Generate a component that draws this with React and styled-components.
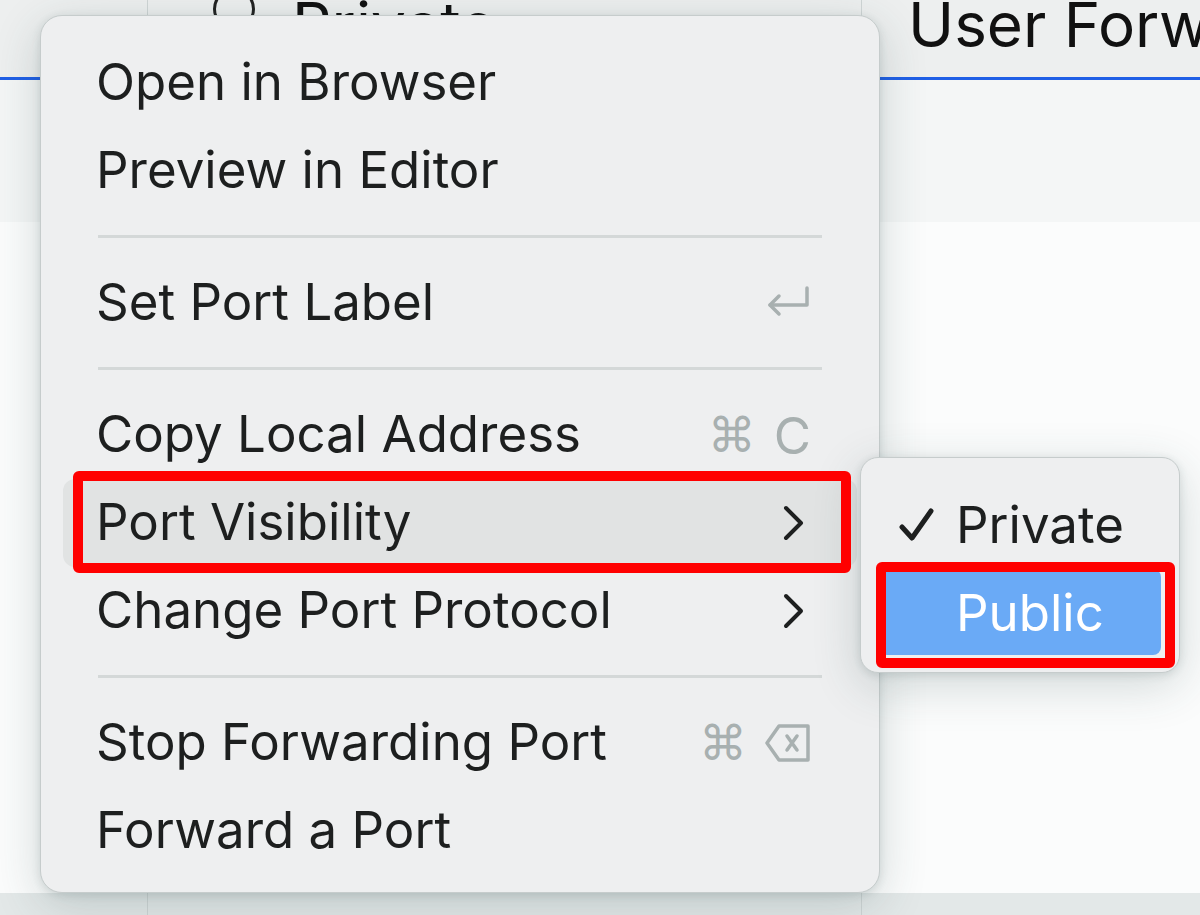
import React from 'react';
import styled, { createGlobalStyle } from 'styled-components';

const GlobalStyle = createGlobalStyle`
  html, body { margin: 0; padding: 0; }
  body { background: #fbfcfc; font-family: Inter, "Noto Sans", sans-serif; }
`;

const Page = styled.div`
  position: relative;
  width: 1200px;
  height: 915px;
  overflow: hidden;
  background: #fbfcfc;
  display: flex;
  flex-direction: column;
`;

const TableRow = styled.div`
  display: grid;
  grid-template-columns: 148px 714px 1fr;
  height: ${({ $h }) => $h}px;
  background: ${({ $bg }) => $bg};
  border-bottom: ${({ $accent }) => ($accent ? '3px solid #1f5fe6' : 'none')};
  flex-shrink: 0;
`;

const Cell = styled.div`
  overflow: hidden;
  border-right: ${({ $divider }) => ($divider ? '1px solid #cfd5d5' : 'none')};
  display: flex;
  align-items: flex-start;
  gap: 37px;
  padding-left: ${({ $pad }) => $pad || 0}px;
  font-family: Inter, "Liberation Sans", sans-serif;
  font-size: 62px;
  line-height: 62px;
  color: #111;
`;

const HeaderText = styled.span`
  margin-top: -6px;
  white-space: nowrap;
`;

const Radio = styled.span`
  width: 36px;
  height: 36px;
  border: 3px solid #222;
  border-radius: 50%;
  margin-top: -12px;
  flex-shrink: 0;
`;

const Band = styled.div`
  height: 142px;
  background: #f4f6f6;
  flex-shrink: 0;
`;

const Filler = styled.div`
  flex: 1;
`;

const Menu = styled.div`
  position: absolute;
  box-sizing: border-box;
  left: ${({ $x }) => $x}px;
  top: ${({ $y }) => $y}px;
  width: ${({ $w }) => $w}px;
  height: ${({ $h }) => $h}px;
  padding: ${({ $pad }) => $pad};
  background: #eeeff0;
  border: 1px solid #c6cccc;
  border-radius: ${({ $r }) => $r}px;
  box-shadow: 0 12px 48px rgba(40, 70, 70, 0.2), 0 2px 8px rgba(40, 70, 70, 0.14);
  display: flex;
  flex-direction: column;
`;

const Item = styled.div`
  display: flex;
  align-items: center;
  height: 88px;
  margin: 0 22px;
  padding: 0 ${({ $right }) => $right || 46}px 0 33px;
  border-radius: 12px;
  background: ${({ $active }) => ($active ? '#e1e3e3' : 'transparent')};
  font-size: 51px;
  color: #1d1f1f;
  white-space: nowrap;
  flex-shrink: 0;
`;

const Label = styled.span`
  flex: 1;
  margin-top: -3px;
`;

const Shortcut = styled.span`
  display: flex;
  align-items: center;
  gap: 18px;
  color: #a8b0b0;
  font-size: 51px;
`;

const CmdGlyph = styled.span`
  font-family: "DejaVu Sans", sans-serif;
  font-size: 48px;
`;

const Separator = styled.div`
  height: 3px;
  background: #d4d8d8;
  margin: 20px 57px 21px;
  flex-shrink: 0;
`;

const SubItem = styled.div`
  display: flex;
  align-items: center;
  height: ${({ $h }) => $h}px;
  margin: 0 18px;
  padding-left: 19px;
  gap: 21px;
  border-radius: 8px;
  background: ${({ $active }) => ($active ? '#6aaaf6' : 'transparent')};
  color: ${({ $active }) => ($active ? '#ffffff' : '#1d1f1f')};
  font-size: 51px;
  flex-shrink: 0;
`;

const CheckSlot = styled.span`
  width: 37px;
  height: 37px;
  display: flex;
  flex-shrink: 0;
`;

const Callout = styled.div`
  position: absolute;
  box-sizing: border-box;
  left: ${({ $x }) => $x}px;
  top: ${({ $y }) => $y}px;
  width: ${({ $w }) => $w}px;
  height: ${({ $h }) => $h}px;
  border: 10px solid #ff0000;
  border-radius: 6px;
  pointer-events: none;
`;

const ReturnIcon = () => (
  <svg width="46" height="36" viewBox="0 0 46 36" fill="none" stroke="#a8b0b0" strokeWidth="3.5" strokeLinecap="round" strokeLinejoin="round">
    <path d="M42 3 V20 H5" />
    <path d="M14 11 L5 20 L14 29" />
  </svg>
);

const DeleteIcon = () => (
  <svg width="46" height="40" viewBox="0 0 46 40" fill="none" stroke="#a8b0b0" strokeWidth="3.5" strokeLinejoin="round" strokeLinecap="round">
    <path d="M14 3 H43 V37 H14 L2 20 Z" />
    <path d="M22 13 L32 27 M32 13 L22 27" />
  </svg>
);

const Chevron = () => (
  <svg width="24" height="38" viewBox="0 0 24 38" fill="none" stroke="#1d1f1f" strokeWidth="4" strokeLinecap="round" strokeLinejoin="round">
    <path d="M4 4 L19 19 L4 34" />
  </svg>
);

const Check = () => (
  <svg width="37" height="37" viewBox="0 0 37 37" fill="none" stroke="#1d1f1f" strokeWidth="5" strokeLinecap="round" strokeLinejoin="round">
    <path d="M4 21 L14 32 L33 5" />
  </svg>
);

const Cmd = ({ children }) => (
  <Shortcut>
    <CmdGlyph>⌘</CmdGlyph>
    {children}
  </Shortcut>
);

export default function App() {
  return (
    <>
      <GlobalStyle />
      <Page>
        <TableRow $h={77} $bg="#edefef" $accent>
          <Cell $divider />
          <Cell $divider $pad={65}>
            <Radio />
            <HeaderText>Private</HeaderText>
          </Cell>
          <Cell $pad={46}>
            <HeaderText>User Forwarded</HeaderText>
          </Cell>
        </TableRow>
        <Band />
        <Filler />
        <TableRow $h={22} $bg="#e3e8e8">
          <Cell $divider />
          <Cell $divider />
          <Cell />
        </TableRow>

        <Menu $x={40} $y={15} $w={840} $h={878} $r={22} $pad="23px 0 19px">
          <Item><Label>Open in Browser</Label></Item>
          <Item><Label>Preview in Editor</Label></Item>
          <Separator />
          <Item><Label>Set Port Label</Label><ReturnIcon /></Item>
          <Separator />
          <Item><Label>Copy Local Address</Label><Cmd>C</Cmd></Item>
          <Item $active $right={51}><Label>Port Visibility</Label><Chevron /></Item>
          <Item $right={51}><Label>Change Port Protocol</Label><Chevron /></Item>
          <Separator />
          <Item><Label>Stop Forwarding Port</Label><Cmd><DeleteIcon /></Cmd></Item>
          <Item><Label>Forward a Port</Label></Item>
        </Menu>

        <Menu $x={860} $y={457} $w={320} $h={216} $r={18} $pad="21px 0 0">
          <SubItem $h={90}><CheckSlot><Check /></CheckSlot>Private</SubItem>
          <SubItem $h={86} $active><CheckSlot />Public</SubItem>
        </Menu>

        <Callout $x={73} $y={471} $w={778} $h={102} />
        <Callout $x={876} $y={562} $w={299} $h={106} />
      </Page>
    </>
  );
}
